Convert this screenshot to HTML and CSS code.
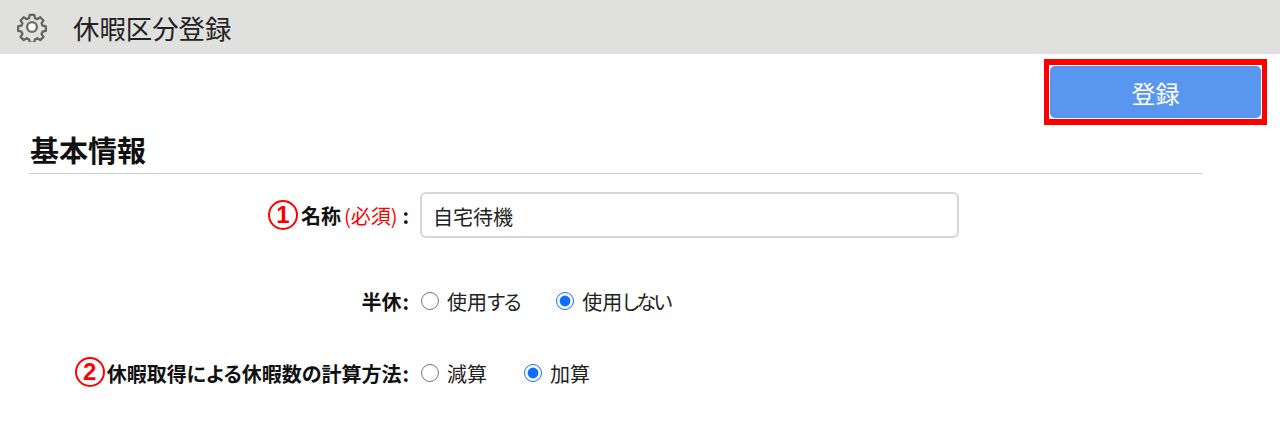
FILE: index.html
```html
<!DOCTYPE html>
<html lang="ja">
<head>
<meta charset="utf-8">
<title>休暇区分登録</title>
<link rel="stylesheet" href="styles.css">
</head>
<body>
<header class="topbar">
  <svg class="gear" viewBox="0 0 32 32" width="30" height="30" aria-hidden="true">
    <path class="gear-body" d="M13.6 3h4.8l.8 3.6 2.5 1 3.1-2 3.4 3.4-2 3.1 1 2.5 3.6.8v4.8l-3.6.8-1 2.5 2 3.1-3.4 3.4-3.1-2-2.5 1-.8 3.6h-4.8l-.8-3.6-2.5-1-3.1 2-3.4-3.4 2-3.1-1-2.5-3.6-.8v-4.8l3.6-.8 1-2.5-2-3.1 3.4-3.4 3.1 2 2.5-1z"/>
    <circle class="gear-hole" cx="16" cy="16" r="5.2"/>
  </svg>
  <h1 class="page-title">休暇区分登録</h1>
</header>
<main class="content">
  <div class="actions">
    <div class="highlight"><button class="submit" type="button">登録</button></div>
  </div>
  <h2 class="section-title">基本情報</h2>
  <form class="form">
    <div class="row row-name">
      <div class="label"><span class="mark">1</span><b>名称<span class="required">(必須)</span><span class="colon">:</span></b></div>
      <input class="text-input" type="text" value="自宅待機">
    </div>
    <div class="row row-half">
      <div class="label"><b>半休<span class="colon">:</span></b></div>
      <div class="radios">
        <label class="radio"><input type="radio" name="half"><span>使用<span class="kana-s">する</span></span></label>
        <label class="radio"><input type="radio" name="half" checked><span>使用<span class="kana">しない</span></span></label>
      </div>
    </div>
    <div class="row row-calc">
      <div class="label"><span class="mark">2</span><b>休暇取得による休暇数の計算方法<span class="colon">:</span></b></div>
      <div class="radios">
        <label class="radio"><input type="radio" name="calc">減算</label>
        <label class="radio"><input type="radio" name="calc" checked>加算</label>
      </div>
    </div>
  </form>
</main>
</body>
</html>
```
FILE: styles.css
```css
* { box-sizing: border-box; }
html, body { margin: 0; padding: 0; }
body {
  background: #fff;
  color: #212529;
  font-family: "Noto Sans CJK JP", "Noto Sans", sans-serif;
  height: 426px;
  overflow: hidden;
}
.topbar {
  height: 54px;
  background: #e0e0de;
  display: flex;
  align-items: center;
  padding-left: 17px;
  gap: 26px;
}
.gear { display: block; }
.gear-body { fill: none; stroke: #636363; stroke-width: 2.4; stroke-linejoin: round; }
.gear-hole { fill: #fff; stroke: #6e6e6e; stroke-width: 2.6; }
.page-title {
  margin: 2px 0 0;
  font-size: 26.4px;
  font-weight: 400;
  line-height: 1;
  color: #222;
}
.content { padding: 5px 78px 0 29px; }
.actions { display: flex; justify-content: flex-end; margin-right: -65px; }
.highlight {
  border-style: solid;
  border-color: #f00;
  border-width: 6px 5px;
  width: 223px;
  height: 66px;
  padding: 1px;
}
.submit {
  display: block;
  width: 100%;
  height: 100%;
  border: 0;
  border-radius: 5px;
  background: #5896ef;
  color: #fff;
  font: inherit;
  font-size: 24px;
}
.section-title {
  margin: 4px 0 0;
  height: 45px;
  border-bottom: 1px solid #ccc;
  font-size: 29px;
  font-weight: 700;
  line-height: 40px;
  color: #111;
  padding-left: 1px;
}
.form { display: flex; flex-direction: column; }
.row { display: flex; align-items: center; gap: 12px; }
.row-name { margin-top: 18px; height: 46px; }
.row-half { margin-top: 41px; height: 44px; }
.row-calc { margin-top: 28px; height: 44px; }
.label {
  width: 380px;
  display: flex;
  justify-content: flex-end;
  align-items: center;
  font-size: 20px;
  font-feature-settings: "palt";
  color: #111;
}
.label b { font-weight: 700; white-space: nowrap; }
.required { color: #f00; font-weight: 400; padding: 0 4px 0 3px; }
.colon { padding-left: 1px; }
.mark {
  width: 30px;
  height: 30px;
  margin-right: 2px;
  border: 2px solid #f00;
  border-radius: 50%;
  color: #f00;
  font-family: "Liberation Sans", sans-serif;
  font-size: 24px;
  font-weight: 700;
  line-height: 26px;
  text-align: center;
}
.row-name .mark { margin-right: 3px; }
.row-calc .mark { margin-top: -2px; }
.text-input {
  width: 539px;
  height: 46px;
  margin-left: -1px;
  padding: 2px 11px 0;
  border: 2px solid #d6d6d6;
  border-radius: 6px;
  font: inherit;
  font-size: 20px;
  color: #222;
  outline: none;
}
.radios {
  display: flex;
  gap: 36px;
  font-size: 20px;
  font-feature-settings: "palt";
  color: #222;
}
.row-calc .radios { gap: 37px; }
.kana { letter-spacing: -2.6px; }
.kana-s { letter-spacing: -1.4px; }
.radio { display: flex; align-items: center; gap: 8px; }
.radio input { width: 18px; height: 18px; margin: 0; accent-color: #0d6efd; }
```
